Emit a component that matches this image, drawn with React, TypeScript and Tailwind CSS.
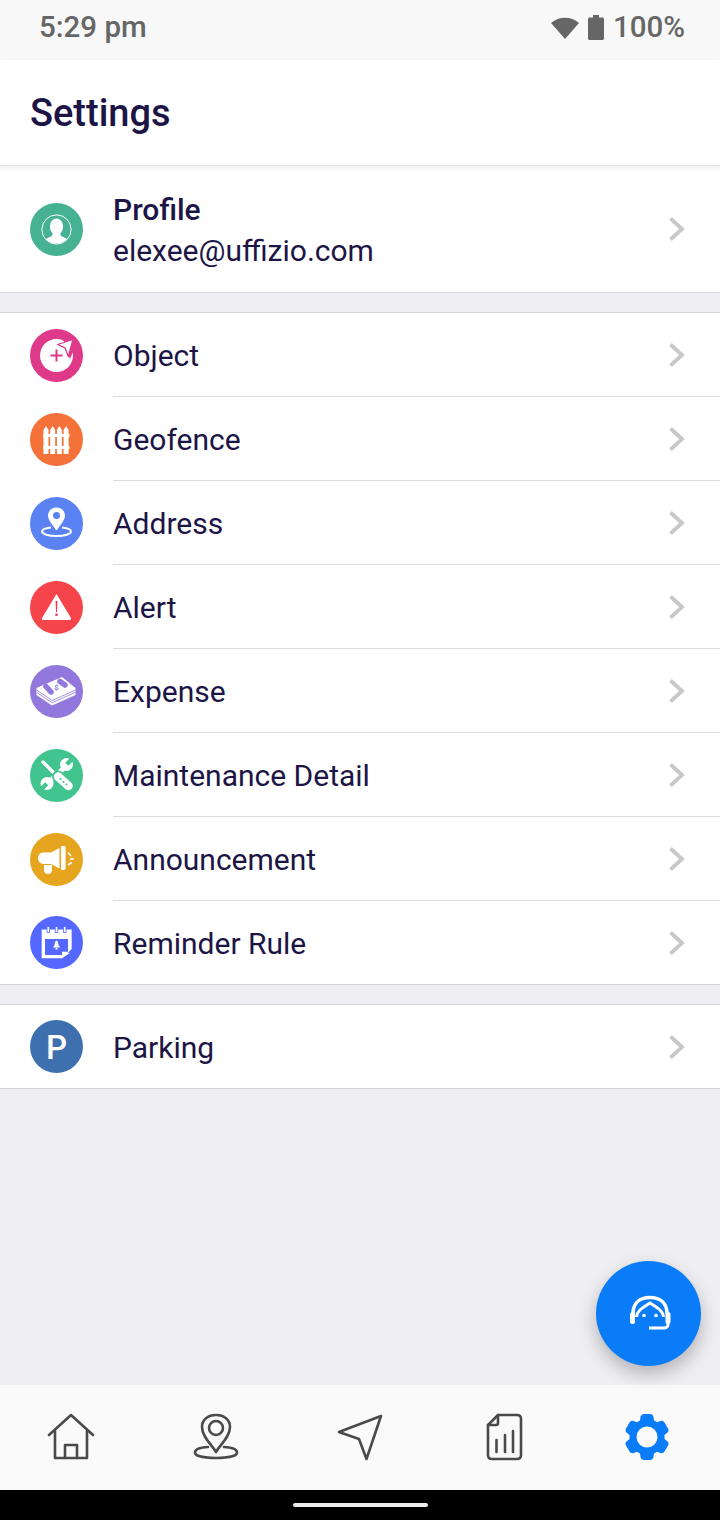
import { ReactNode } from "react";

function Chevron() {
  return (
    <svg width="18" height="26" viewBox="0 0 18 26" className="shrink-0">
      <path d="M2.5 2.5 L14 13 L2.5 23.5" fill="none" stroke="#c8c8cc" strokeWidth="3.8" />
    </svg>
  );
}

function Badge({ color, children }: { color: string; children: ReactNode }) {
  return (
    <div className={`flex h-[53px] w-[53px] shrink-0 items-center justify-center rounded-full ${color}`}>
      <svg width="53" height="53" viewBox="0 0 53 53">
        {children}
      </svg>
    </div>
  );
}

const icons = {
  profile: (
    <>
      <circle cx="26.5" cy="26.5" r="14.6" fill="none" stroke="#fff" strokeWidth="1" />
      <clipPath id="pc">
        <circle cx="26.5" cy="26.5" r="14.1" />
      </clipPath>
      <g clipPath="url(#pc)" fill="#fff">
        <ellipse cx="26.5" cy="23.5" rx="6.6" ry="8" />
        <path d="M23 29 L30 29 L31 33 C35 34.5 38 36 40 39 L40 44 L13 44 L13 39 C15 36 18 34.5 22 33 Z" />
      </g>
    </>
  ),
  object: (
    <>
      <circle cx="26.5" cy="26.5" r="16.5" fill="#fff" />
      <path d="M33 9.5 L41 7.5 L46 16 L40 30 L36 20 Z" fill="#df3a8a" />
      <path d="M27.5 15.5 L43 10.5 L38.3 27.5 L35 18.8 Z" fill="#fff" stroke="#df3a8a" strokeWidth="1.3" strokeLinejoin="round" />
      <path d="M20.5 26.5 H32.5 M26.5 20.5 V32.5" stroke="#df3a8a" strokeWidth="2" />
    </>
  ),
  geofence: (
    <g fill="#fff">
      <path d="M13.5 17 L16 13 L18.5 17 V41 H13.5 Z" />
      <path d="M20.2 17 L22.7 13 L25.2 17 V41 H20.2 Z" />
      <path d="M26.9 17 L29.4 13 L31.9 17 V41 H26.9 Z" />
      <path d="M33.6 17 L36.1 13 L38.6 17 V41 H33.6 Z" />
      <rect x="13" y="21" width="26.5" height="3" />
      <rect x="13" y="33" width="26.5" height="3" />
    </g>
  ),
  address: (
    <>
      <path
        d="M26.5 10.5 C21 10.5 18 14.5 18 18.5 C18 23.5 23 28 26.5 34 C30 28 35 23.5 35 18.5 C35 14.5 32 10.5 26.5 10.5 Z"
        fill="#fff"
      />
      <circle cx="26.5" cy="18.5" r="3.5" fill="#5b82f2" />
      <path
        d="M21 30.5 C15 31.2 12 32.5 12 34.5 C12 37 18.5 39 26.5 39 C34.5 39 41 37 41 34.5 C41 32.5 38 31.2 32 30.5"
        fill="none"
        stroke="#fff"
        strokeWidth="2"
      />
      <ellipse cx="26.5" cy="34.5" rx="9" ry="1.6" fill="#5b82f2" />
    </>
  ),
  alert: (
    <>
      <path d="M26.5 13 L41 37 C41.3 38 40.8 39 39.5 39 H13.5 C12.2 39 11.7 38 12 37 Z" fill="#fff" />
      <path d="M25.6 20 H27.4 L27 31 H26 Z" fill="#e8334f" />
      <circle cx="26.5" cy="33.8" r="1.3" fill="#e8334f" />
    </>
  ),
  expense: (
    <>
      <path d="M6.5 23 L32 12 L45.5 23 V30 L22 40.5 L6.5 30 Z" fill="#fff" />
      <g fill="none" stroke="#9277dd" strokeWidth="0.8">
        <path d="M7 25.3 L22 35.5 L45.5 25" />
        <path d="M7 27.6 L22 37.8 L45.5 27.3" />
      </g>
      <g stroke="#9277dd" strokeWidth="5.5" strokeLinecap="round">
        <path d="M16 21.5 L21 27" />
        <path d="M30 16.5 L35 20" />
      </g>
      <text x="26.3" y="24.5" fontSize="7.5" fontWeight="700" textAnchor="middle" fill="#9277dd" fontFamily="Roboto, sans-serif">
        $
      </text>
    </>
  ),
  maintenance: (
    <>
      <g fill="#fff">
        <circle cx="36.5" cy="15.5" r="6.5" />
        <circle cx="17" cy="34.5" r="6.5" />
      </g>
      <path d="M33 20 L20 32" stroke="#fff" strokeWidth="5" />
      <path d="M36.8 15.2 L44 8" stroke="#41c48d" strokeWidth="4.4" />
      <path d="M16.7 34.8 L9.5 42" stroke="#41c48d" strokeWidth="4.4" />
      <path d="M13 13 L26 26" stroke="#fff" strokeWidth="3.4" strokeLinecap="round" />
      <path d="M28 27.5 L38.5 37" stroke="#41c48d" strokeWidth="12" strokeLinecap="round" />
      <path d="M28 27.5 L38.5 37" stroke="#fff" strokeWidth="8.5" strokeLinecap="round" />
      <g fill="#41c48d">
        <circle cx="30.5" cy="30" r="1" />
        <circle cx="33.5" cy="32.8" r="1" />
        <circle cx="36.5" cy="35.5" r="1" />
      </g>
    </>
  ),
  announcement: (
    <g fill="#fff">
      <path d="M29.5 15 V35.5 L21 31 H14 C10.5 31 8 28.5 8 25 C8 21.5 10.5 19.5 14 19.5 H21 Z" />
      <path d="M14 32 H22 V37 C22 39.5 20.5 41 18 41 C15.5 41 14 39.5 14 37 Z" />
      <rect x="31" y="13" width="4.6" height="24" rx="1.4" />
      <path d="M38 19.5 L41 23 M40 26 H44 M38 32 L41.7 29.5" stroke="#fff" strokeWidth="1.7" fill="none" />
    </g>
  ),
  reminder: (
    <>
      <path d="M11.7 13.5 H41.7 V33 L32.5 42.3 H11.7 Z" fill="#fff" />
      <path d="M15 23 H38 V35.7 H32 V39 H15 Z" fill="#5468ff" />
      <path d="M33.5 37 H40 L33.5 41 Z" fill="#fff" />
      <g fill="#fff" stroke="#5468ff" strokeWidth="0.8">
        <rect x="17" y="10.5" width="2.6" height="6" />
        <rect x="25.2" y="10.5" width="2.6" height="6" />
        <rect x="33.4" y="10.5" width="2.6" height="6" />
      </g>
      <path d="M26.5 24.5 C24.5 25.5 25 27.5 24.5 29 L23 31.5 H30 L28.5 29 C28 27.5 28.5 25.5 26.5 24.5 Z" fill="#fff" />
      <rect x="25.5" y="32" width="2" height="1.6" fill="#fff" />
    </>
  ),
  parking: (
    <text x="26.6" y="38.5" fontSize="33" fontWeight="500" textAnchor="middle" fill="#fff" fontFamily="Roboto, sans-serif">
      P
    </text>
  ),
};

const mainItems = [
  { label: "Object", color: "bg-[#df3a8a]", icon: icons.object },
  { label: "Geofence", color: "bg-[#f4713a]", icon: icons.geofence },
  { label: "Address", color: "bg-[#5b82f2]", icon: icons.address },
  { label: "Alert", color: "bg-[#f5444a]", icon: icons.alert },
  { label: "Expense", color: "bg-[#9277dd]", icon: icons.expense },
  { label: "Maintenance Detail", color: "bg-[#41c48d]", icon: icons.maintenance },
  { label: "Announcement", color: "bg-[#e6a51e]", icon: icons.announcement },
  { label: "Reminder Rule", color: "bg-[#5468ff]", icon: icons.reminder },
];

function Row({ label, color, icon, last }: { label: string; color: string; icon: ReactNode; last?: boolean }) {
  return (
    <div className={`flex items-center pl-[30px] ${last ? "h-[83px]" : "h-[84px]"}`}>
      <Badge color={color}>{icon}</Badge>
      <div className={`ml-[30px] flex h-full flex-1 items-center justify-between pr-[34px] ${last ? "" : "border-b border-[#dcdcdf]"}`}>
        <span className="pt-[2px] text-[30px] leading-none text-[#1c1545]">{label}</span>
        <Chevron />
      </div>
    </div>
  );
}

function NavIcon({ children }: { children: ReactNode }) {
  return (
    <svg width="50" height="50" viewBox="0 0 50 50" fill="none" stroke="#4a4a4c" strokeWidth="2.6" strokeLinejoin="round" strokeLinecap="round">
      {children}
    </svg>
  );
}

export default function App() {
  return (
    <div className="flex h-[1520px] w-[720px] flex-col overflow-hidden bg-[#eeeef3] font-['Roboto',sans-serif]">
      <div className="flex h-[60px] items-center justify-between bg-[#f8f8f8] pb-[6px] pl-[39px] pr-[35px] text-[29.5px] font-medium text-[#666666]">
        <span>5:29 pm</span>
        <div className="flex items-center gap-[9px]">
          <svg width="28" height="23" viewBox="0 0 28 23">
            <path d="M0 7 C8 0 20 0 28 7 L14 23 Z" fill="#666666" />
          </svg>
          <svg width="16" height="25" viewBox="0 0 16 25">
            <path d="M5 0 H11 V2.5 H14.5 C15.3 2.5 16 3.2 16 4 V23.5 C16 24.3 15.3 25 14.5 25 H1.5 C0.7 25 0 24.3 0 23.5 V4 C0 3.2 0.7 2.5 1.5 2.5 H5 Z" fill="#666666" />
          </svg>
          <span>100%</span>
        </div>
      </div>

      <div className="relative z-10 flex h-[106px] items-center border-b border-[#e4e4e6] bg-white pl-[30px] shadow-[0_2px_5px_rgba(0,0,0,0.07)]">
        <h1 className="text-[38px] font-medium leading-none text-[#1c1545]">Settings</h1>
      </div>

      <div className="flex h-[127px] items-center border-b border-[#d6d6d9] bg-white pl-[30px] pr-[34px]">
        <Badge color="bg-[#46b293]">{icons.profile}</Badge>
        <div className="ml-[30px] flex-1 pt-[1px]">
          <div className="text-[30px] font-medium leading-[41px] text-[#1c1545]">Profile</div>
          <div className="text-[30px] leading-[41px] text-[#1c1545]">elexee@uffizio.com</div>
        </div>
        <Chevron />
      </div>

      <div className="mt-[19px] border-y border-[#d6d6d9] bg-white">
        {mainItems.map((item, i) => (
          <Row key={item.label} {...item} last={i === mainItems.length - 1} />
        ))}
      </div>

      <div className="mt-[19px] border-y border-[#d6d6d9] bg-white">
        <Row label="Parking" color="bg-[#3e6fae]" icon={icons.parking} last />
      </div>

      <div className="relative flex-1">
        <div className="absolute bottom-[19px] right-[19px] flex h-[105px] w-[105px] items-center justify-center rounded-full bg-[#0a7cf7] shadow-[0_8px_18px_rgba(0,0,0,0.25)]">
          <svg width="56" height="50" viewBox="0 0 56 50" fill="none" stroke="#fff" className="mt-[3px]">
            <path d="M12 24 C12 13 19 7.5 29 7.5 C39 7.5 46 13 46 24" strokeWidth="3.6" />
            <path d="M15.5 27 C16 20 23 17 29 13 C35 17 42 20 42.5 27" strokeWidth="3" />
            <rect x="9" y="22" width="5" height="12" rx="2.5" fill="#fff" stroke="none" />
            <rect x="44.5" y="22" width="5" height="12" rx="2.5" fill="#fff" stroke="none" />
            <path d="M47 33 V34.5 C47 36.5 45.5 38 43.5 38 H28" strokeWidth="3" />
            <circle cx="23" cy="25.5" r="1.8" fill="#fff" stroke="none" />
            <circle cx="35" cy="25.5" r="1.8" fill="#fff" stroke="none" />
          </svg>
        </div>
      </div>

      <div className="flex h-[105px] items-start justify-between bg-[#fafafa] pl-[46px] pr-[50px] pt-[28px]">
        <NavIcon>
          <path d="M3 22 L25 2 L47 22" />
          <path d="M9 18 V45 H41 V18" />
          <path d="M19 45 V32 H31 V45" />
        </NavIcon>
        <NavIcon>
          <path d="M25 39 C21 32 11 24 11 14 C11 6.5 17 2 25 2 C33 2 39 6.5 39 14 C39 24 29 32 25 39 Z" />
          <circle cx="25" cy="15" r="7" />
          <path d="M17 34 C8 34.5 4 36.5 4 39.5 C4 43 13 45 25 45 C37 45 46 43 46 39.5 C46 36.5 42 34.5 33 34" />
        </NavIcon>
        <NavIcon>
          <path d="M46 3 L4 19 L24 26 L31.5 46 Z" />
        </NavIcon>
        <NavIcon>
          <path d="M18 2 H37 C39.5 2 41 3.5 41 6 V42 C41 44.5 39.5 46 37 46 H12 C9.5 46 8 44.5 8 42 V12 Z" />
          <path d="M8 12 H16 C17.5 12 18 11.5 18 10 V2" />
          <path d="M16.5 27 V39 M25 22 V39 M33 18 V39" />
        </NavIcon>
        <svg width="46" height="46" viewBox="0 0 46 46" className="mt-[1px]">
          <path
            fillRule="evenodd"
            fill="#0a7cf7"
            d="M18 1 C18 0 19 0 20 0 H26 C28 0 29 1 29.5 3 L30 6.5 C31 7 32 7.5 33 8.2 L36.5 7 C38 6.5 39.5 7 40.5 8.5 L44 14.5 C45 16 44.5 17.5 43.5 18.5 L40.5 21 V25 L43.5 27.5 C44.5 28.5 45 30 44 31.5 L40.5 37.5 C39.5 39 38 39.5 36.5 39 L33 37.8 C32 38.5 31 39 30 39.5 L29.5 43 C29 45 28 46 26 46 H20 C18 46 17 45 16.5 43 L16 39.5 C15 39 14 38.5 13 37.8 L9.5 39 C8 39.5 6.5 39 5.5 37.5 L2 31.5 C1 30 1.5 28.5 2.5 27.5 L5.5 25 V21 L2.5 18.5 C1.5 17.5 1 16 2 14.5 L5.5 8.5 C6.5 7 8 6.5 9.5 7 L13 8.2 C14 7.5 15 7 16 6.5 L16.5 3 C16.7 2 17 1.5 18 1 Z M23 12.5 A10.5 10.5 0 1 0 23 33.5 A10.5 10.5 0 1 0 23 12.5 Z"
          />
        </svg>
      </div>

      <div className="flex h-[30px] items-center justify-center bg-black">
        <div className="mt-[-1px] h-[4px] w-[135px] rounded-full bg-[#eeeeee]" />
      </div>
    </div>
  );
}
